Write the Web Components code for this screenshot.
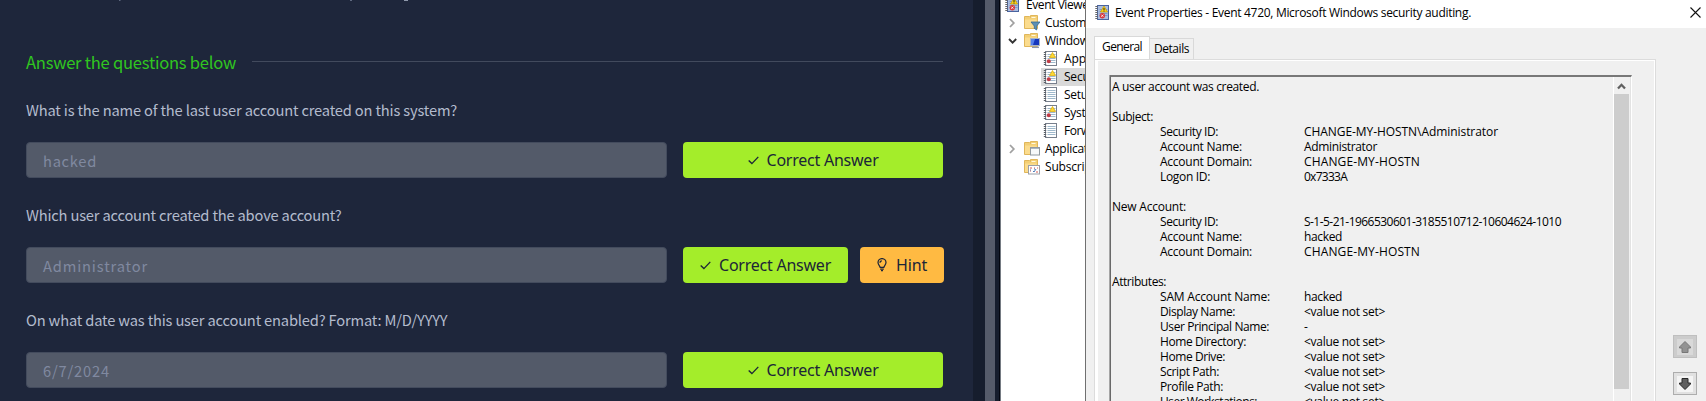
<!DOCTYPE html>
<html lang="en"><head><meta charset="utf-8"><title>Event log questions</title>
<style>html,body{margin:0;height:401px;overflow:hidden;background:#1e263b}</style></head>
<body><split-view></split-view>
<script>
const define=(name,html,setup)=>customElements.define(name,class extends HTMLElement{
  connectedCallback(){
    if(this.shadowRoot)return;
    const root=this.attachShadow({mode:'open'});
    root.innerHTML=typeof html==='function'?html(this):html;
    if(setup)setup(this,root);
  }
});
/* Text run tracked to a given advance width. */
define('fit-text','<style>:host{display:inline-block;white-space:pre}</style><span><slot></slot></span>',(el,root)=>{
  const w=+el.getAttribute('w'),s=root.querySelector('span');
  if(!w)return;
  const n=el.textContent.length;
  const nat=s.getBoundingClientRect().width;
  s.style.letterSpacing=((w-nat)/n)+'px';
});
const book=`<rect x="2.500" y=".5" width="11" height="14" fill="#fff" stroke="#777f8c"/><path d="M4.500 3.500h8M4.500 5.500h8M4.500 7.500h8M4.500 9.500h8M4.500 11.500h8" stroke="#9fb9cc"/><path d="M2 1v14" stroke="#5a5f66" stroke-width="2.400" stroke-dasharray="1 1"/>`;
const folder=`<path d="M.5 1.500h5l1 1v-2h7v13H.5z" fill="#f3cf75" stroke="#e0b65a"/><path d="M7.500 2.500h4" stroke="#fff8df"/><path d="M1 4.500h11.500V13H1z" fill="#fbdc8e"/>`;
const icons={
 log:book+`<path d="M9.500 1.500l3 5h-6z" fill="#fdd835" stroke="#d8a800" stroke-width=".7"/><circle cx="5.800" cy="10.300" r="2" fill="#c13b46"/>`,
 plain:book,
 viewer:`<rect x="2.500" y=".5" width="11" height="14" fill="#a9bde0" stroke="#4a64a0"/><path d="M4.500 4.500h8M4.500 6.500h8M4.500 8.500h8M4.500 10.500h8" stroke="#7e98c8"/><path d="M1.500 1v14" stroke="#666" stroke-width="2.400" stroke-dasharray="1 1"/><path d="M9 1l3.500 6h-7z" fill="#fbd318" stroke="#c99b00" stroke-width=".7"/><path d="M9 3v2M9 5.500v1" stroke="#222"/><circle cx="7.300" cy="10.700" r="2.700" fill="#d9383d"/><path d="M6.200 9.600l2.200 2.200m0-2.200l-2.200 2.200" stroke="#fff" stroke-width=".8"/>`,
 filter:folder+`<path d="M7 7h9l-3.300 4v4l-2.400-1.600V11z" fill="#5b8fb5" stroke="#356b92" stroke-width=".8"/>`,
 computer:folder+`<rect x="6.500" y="5.500" width="9" height="7" fill="#1537bd" stroke="#aab4c4"/><path d="M7 6h4l-2 6H7z" fill="#5480ea"/><path d="M8 14.300h7" stroke="#8a97ad" stroke-width="1.500"/>`,
 window:folder+`<rect x="6.500" y="6.500" width="9" height="7.500" fill="#f7f9fa" stroke="#929aa0"/><path d="M7 7.500h8" stroke="#abb6bf"/>`,
 calendar:folder+`<rect x="4.500" y="6.500" width="11" height="8.500" fill="#fff" stroke="#9a9fa8"/><path d="M6 9h2m2 0h1m2 0h1M6 12h1m5 1h2" stroke="#d65a52"/><path d="M6 11h1m3-1h1m-2 2l1 1 2-3" stroke="#4c7ab8" fill="none"/>`
};
define('log-icon',el=>`<style>:host{display:block;flex:none;width:16px;height:16px}svg{display:block}</style><svg width="16" height="16" fill="none">${icons[el.getAttribute('kind')]}</svg>`);

define('answer-button',el=>{
 const hint=el.hasAttribute('hint');
 return `<style>:host{display:block;flex:none;width:var(--w);height:36px}
 button{all:unset;box-sizing:border-box;width:100%;height:36px;border-radius:4px;background:${hint?'#ffba42':'#a4ed2a'};display:flex;align-items:center;justify-content:center;gap:${hint?9:8}px;color:#1c2538;font:400 16px/36px "Noto Sans","Open Sans",sans-serif}svg{display:block;flex:none}</style>
 <button>${hint?'<svg width="10" height="14" viewBox="0 0 10 14" fill="none" stroke="#1c2538" stroke-width="1.250"><path d="M3.200 9.300C3 7.800 1 6.800 1 4.600a4 4 0 0 1 8 0c0 2.200-2 3.200-2.200 4.700zM3.200 11h3.600M4 12.600h2M3 4.700c0-1.200.8-1.900 1.900-1.900"/></svg>':'<svg width="11" height="9" viewBox="0 0 11 9" fill="none" stroke="#1c2538" stroke-width="1.350"><path d="M.7 4.500l3.200 3.100L10.300.9"/></svg>'}<fit-text w="${hint?31:112}">${hint?'Hint':'Correct Answer'}</fit-text></button>`});

define('question-row',el=>`<style>:host{display:block;height:105px}
 p{margin:0;height:44px;font-size:14.700px;line-height:24px;color:#b3bbcd}
 .row{display:flex}
 .field{box-sizing:border-box;width:641px;height:36px;border:1px solid #434b5d;border-radius:4px;background:#535a69;padding-left:16px;color:#8089a0;font-size:14.700px;line-height:35px;margin-right:16px}
 answer-button{--w:260px}.hinted answer-button{--w:165px;margin-right:12px}.hinted answer-button[hint]{--w:84px;margin:0}</style>
 <p><fit-text w="${el.getAttribute('qw')}">${el.getAttribute('question')}</fit-text></p>
 <div class="row ${el.hasAttribute('hint')?'hinted':''}"><div class="field"><fit-text w="${el.getAttribute('aw')}">${el.getAttribute('answer')}</fit-text></div><answer-button></answer-button>${el.hasAttribute('hint')?'<answer-button hint></answer-button>':''}</div>`);

define('task-panel',`<style>:host{display:flex;width:1001px;height:401px;flex:none;background:#1e263b;font-family:"Noto Sans CJK SC",sans-serif;overflow:hidden}
 main{box-sizing:border-box;width:973px;padding:0 0 0 26px;flex:none}
 .above{display:block;height:49px}
 header{display:flex;align-items:center;height:26px;color:#30c520;font-size:16.600px;line-height:26px;margin-bottom:23px}
 header i{height:1px;width:691px;background:#424a5d;margin-left:16px;margin-top:-1px}
 aside{box-sizing:border-box;width:28px;background:#161d2d;padding:0 5px 0 12px;border-right:1px solid #757b83;box-shadow:inset -1px 0 #03060f}
 aside i{display:block;height:401px;width:10px;background:#555b6a}</style>
 <main><svg class="above" width="400" height="49"><path d="M93 .5h1.500M324 .5h2" stroke="#5f6980"/><path d="M378 .5h4" stroke="#8f98ab"/></svg><header><fit-text w="210">Answer the questions below</fit-text><i></i></header>
 <question-row question="What is the name of the last user account created on this system?" qw="431" answer="hacked" aw="54"></question-row>
 <question-row question="Which user account created the above account?" qw="315.500" answer="Administrator" aw="105" hint></question-row>
 <question-row question="On what date was this user account enabled? Format: M/D/YYYY" qw="421.500" answer="6/7/2024" aw="67"></question-row></main><aside><i></i></aside>`);

define('tree-item',el=>{
 const open=el.getAttribute('arrow');
 return `<style>:host{display:flex;height:18px;align-items:center;box-sizing:border-box;padding-left:var(--pad,5px);white-space:nowrap;color:#000}
 .a{width:16px;height:12px;flex:none;display:block}log-icon{margin-right:5px}.b{display:flex;align-items:center;height:18px;padding-left:2px;flex:1}
 :host([selected]) .b{background:#d9d9d9}</style>
 <svg class="a" width="16" height="12" fill="none" stroke-width="1.800">${open==='open'?'<path stroke="#333" d="M3 4l3.600 3.700L10.200 4"/>':open?'<path stroke="#a0a0a0" d="M4 2l3.800 4L4 10"/>':''}</svg><span class="b"><log-icon kind="${el.getAttribute('kind')}"></log-icon><fit-text w="${el.getAttribute('w')}">${el.textContent}</fit-text></span>`});
define('event-tree',`<style>:host{display:block;width:84px;flex:none;background:#fff;overflow:hidden;height:401px;font:12px/18px "Open Sans",sans-serif}
 div{margin-top:-4px;width:160px}.deep{--pad:24px}.root{--pad:0px;margin-left:-14px}</style>
 <div><tree-item class="root" kind="viewer" w="67">Event Viewer</tree-item>
 <tree-item kind="filter" arrow="closed" w="74">Custom Views</tree-item>
 <tree-item kind="computer" arrow="open" w="77">Windows Logs</tree-item>
 <tree-item class="deep" kind="log" w="61">Application</tree-item>
 <tree-item class="deep" kind="log" w="43" selected>Security</tree-item>
 <tree-item class="deep" kind="plain" w="31">Setup</tree-item>
 <tree-item class="deep" kind="log" w="39">System</tree-item>
 <tree-item class="deep" kind="plain" w="94">Forwarded Events</tree-item>
 <tree-item kind="window" arrow="closed" w="65">Applications</tree-item>
 <tree-item kind="calendar" w="73">Subscriptions</tree-item></div>`);

const lines=[['A user account was created.',147],[],['Subject:',41],['Security ID:',58,'CHANGE-MY-HOSTN\\Administrator',194],['Account Name:',82,'Administrator',73],['Account Domain:',92,'CHANGE-MY-HOSTN',116],['Logon ID:',50,'0x7333A',43],[],['New Account:',74],['Security ID:',58,'S-1-5-21-1966530601-3185510712-10604624-1010',257],['Account Name:',82,'hacked',38],['Account Domain:',92,'CHANGE-MY-HOSTN',116],[],['Attributes:',54],['SAM Account Name:',110,'hacked',38],['Display Name:',75,'<value not set>',81],['User Principal Name:',109,'-',4],['Home Directory:',86,'<value not set>',81],['Home Drive:',65,'<value not set>',81],['Script Path:',59,'<value not set>',81],['Profile Path:',63,'<value not set>',81],['User Workstations:',97,'<value not set>',81]];
const esc=s=>s.replace(/</g,'&lt;').replace(/>/g,'&gt;');
define('event-details',()=>`<style>:host{display:flex;box-sizing:border-box;width:522px;height:340px;border-left:1px solid #696969;border-top:2px solid #787878;border-right:1px solid #fff;box-shadow:-1px 0 #a5a5a5;background:#f0f0f0;font:12px/15px "Open Sans",sans-serif;color:#000}
 .t{flex:1;padding:2px 0 0 1px}.l{display:flex;height:15px}.v{display:flex;padding-left:48px}.v fit-text:first-child{width:144px}
 .s{width:16px;box-sizing:border-box;border-left:1px solid #fff;height:324px;margin-right:1px}.s svg{display:block}.s i{display:block;height:295px;background:#cdcdcd}
 .e{width:1px;background:#e3e3e3}</style>
 <div class="t">${lines.map(l=>`<div class="l">${l.length===2?`<fit-text w="${l[1]}">${l[0]}</fit-text>`:l.length?`<div class="v"><fit-text w="${l[1]}">${l[0]}</fit-text><fit-text w="${l[3]}">${esc(l[2])}</fit-text></div>`:''}</div>`).join('')}</div>
 <div class="s"><svg width="15" height="17"><path d="M4 11.500l3.500-3.700 3.500 3.700" fill="none" stroke="#606060" stroke-width="2.300"/></svg><i></i></div><div class="e"></div>`);

define('nav-button',el=>`<style>:host{display:block;width:24px;height:23px}button{all:unset;display:flex;align-items:center;justify-content:center;box-sizing:border-box;width:24px;height:23px;border:1px solid #adadad;background:#e1e1e1}
 span{width:16px;height:16px;background:#f4f4f4}svg{display:block}:host([disabled]) button{background:#ccc;border-color:#bfbfbf}:host([disabled]) span{background:#d9d9d9}</style><button><span><svg width="16" height="16" ${el.hasAttribute('disabled')?'stroke="#777" fill="#929292"':'stroke="#282828" fill="#606060"'}><path d="${el.hasAttribute('disabled')?'M8 2.500l5.500 5.500v1H11v4.500H5V9H2.500V8z':'M8 13.500l5.500-5.500V7H11V2.500H5V7H2.500v1z'}"/></svg></span></button>`);

define('event-dialog',`<style>:host{display:block;box-sizing:border-box;width:621px;height:401px;border-left:1px solid #707070;background:#f0f0f0;font:12px/16px "Open Sans",sans-serif;color:#000;overflow:hidden}
 header{box-sizing:border-box;display:flex;height:28px;background:#fff;padding:5px 5px 0 9px}header fit-text{margin-left:4px;flex:none}header .x{margin-left:auto;display:block;margin-top:1px}
 .body{display:flex}.tabs{display:flex;align-items:flex-end;height:31px;padding-left:0}
 .tab{box-sizing:border-box;border:1px solid #d9d9d9;border-bottom:0;padding-left:7px}.g{width:56px;height:23px;background:#fff;line-height:20px}.d{width:44px;height:21px;border-left:0;padding-left:4px;line-height:20px}
 .left{width:562px;margin-left:8px;flex:none}
 .page{box-sizing:border-box;width:562px;height:345px;border:1px solid #dcdcdc;padding:15px 0 0 15px;box-shadow:inset 3px 1px #fff,inset -1px 0 #fff}
 .nav{padding:307px 0 0 17px;display:grid;gap:14px;align-content:start}</style>
 <header><log-icon kind="viewer"></log-icon><fit-text w="356">Event Properties - Event 4720, Microsoft Windows security auditing.</fit-text><svg class="x" width="11" height="13"><path d="M.5 1.500l10 10m0-10l-10 10" stroke="#111" stroke-width="1.100"/></svg></header>
 <div class="body"><div class="left"><div class="tabs"><div class="tab g"><fit-text w="40">General</fit-text></div><div class="tab d"><fit-text w="35">Details</fit-text></div></div><div class="page"><event-details></event-details></div></div><div class="nav"><nav-button disabled></nav-button><nav-button></nav-button></div></div>`);
define('split-view','<style>:host{display:flex;width:1706px;height:401px;overflow:hidden}</style><task-panel></task-panel><event-tree></event-tree><event-dialog></event-dialog>');
</script></body></html>
